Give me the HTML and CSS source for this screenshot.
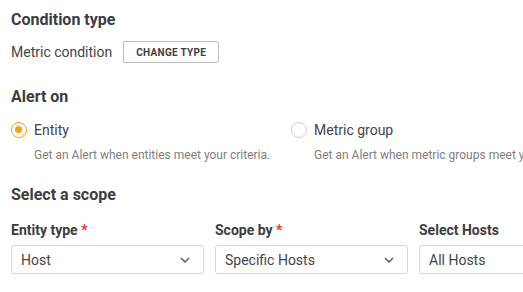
FILE: index.html
```html
<!DOCTYPE html>
<html lang="en">
<head>
  <meta charset="UTF-8" />
  <title>Alert condition</title>
  <link rel="stylesheet" href="styles.css">
</head>
<body>
<div class="form">
  <h2 class="section-title">Condition type</h2>
  <div class="type-row">
    <span class="type-name">Metric condition</span>
    <button class="btn-outline">Change type</button>
  </div>

  <h2 class="section-title spaced">Alert on</h2>
  <div class="radio-group">
    <label class="radio-option">
      <span class="radio-line">
        <span class="radio checked"></span>
        <span class="radio-label">Entity</span>
      </span>
      <span class="radio-hint">Get an Alert when entities meet your criteria.</span>
    </label>
    <label class="radio-option">
      <span class="radio-line">
        <span class="radio"></span>
        <span class="radio-label">Metric group</span>
      </span>
      <span class="radio-hint">Get an Alert when metric groups meet your criteria.</span>
    </label>
  </div>

  <h2 class="section-title scope">Select a scope</h2>
  <div class="field-grid">
    <div class="field">
      <label class="field-label">Entity type <span class="req">*</span></label>
      <div class="select">
        <span>Host</span>
        <svg class="chev" width="10" height="6" viewBox="0 0 10 6"><path d="M1 1l4 4 4-4" fill="none" stroke="#555" stroke-width="1.4"/></svg>
      </div>
    </div>
    <div class="field">
      <label class="field-label">Scope by <span class="req">*</span></label>
      <div class="select">
        <span>Specific Hosts</span>
        <svg class="chev" width="10" height="6" viewBox="0 0 10 6"><path d="M1 1l4 4 4-4" fill="none" stroke="#555" stroke-width="1.4"/></svg>
      </div>
    </div>
    <div class="field">
      <label class="field-label">Select Hosts</label>
      <div class="select">
        <span>All Hosts</span>
      </div>
    </div>
  </div>
</div>
</body>
</html>
```

FILE: styles.css
```css
body {
  margin: 0;
  font-family: Roboto, "Liberation Sans", sans-serif;
  color: #444;
  background: #fff;
  overflow: hidden;
}

.form {
  padding: 10px 0 0 11px;
}

/* Заглавија */
.section-title {
  margin: 0;
  font-size: 16px;
  line-height: 20px;
  font-weight: 700;
  color: #3d3d3d;
}
.section-title.spaced { margin-top: 24px; }
.section-title.scope { margin-top: 22px; }

.type-row {
  display: flex;
  align-items: center;
  gap: 11px;
  margin-top: 11px;
}
.type-name {
  font-size: 14px;
  color: #444;
}
.btn-outline {
  height: 22px;
  padding: 0 12px;
  border: 1px solid #bdbdbd;
  border-radius: 2px;
  background: #fff;
  font-family: inherit;
  font-size: 10px;
  font-weight: 700;
  text-transform: uppercase;
  color: #3d3d3d;
  letter-spacing: 0.3px;
}

/* Радио */
.radio-group {
  display: grid;
  grid-template-columns: 280px 1fr;
  margin-top: 13px;
  white-space: nowrap;
}
.radio-option {
  display: flex;
  flex-direction: column;
  overflow: hidden;
}
.radio-line {
  display: flex;
  align-items: center;
  gap: 7px;
  height: 20px;
}
.radio {
  width: 16px;
  height: 16px;
  box-sizing: border-box;
  border: 1px solid #d0d0d0;
  border-radius: 50%;
  position: relative;
  flex: none;
}
.radio.checked {
  border: 1.5px solid #f6a01a;
}
.radio.checked::after {
  content: "";
  position: absolute;
  left: 3px;
  top: 3px;
  width: 7px;
  height: 7px;
  border-radius: 50%;
  background: #f6a01a;
}
.radio-label {
  font-size: 14px;
  color: #444;
}
.radio-hint {
  margin: 7px 0 0 23px;
  font-size: 12px;
  line-height: 16px;
  color: #808080;
}

/* Полиња */
.field-grid {
  display: grid;
  grid-template-columns: 193px 193px 193px;
  column-gap: 11px;
  margin-top: 16px;
}
.field-label {
  display: block;
  font-size: 14px;
  line-height: 18px;
  font-weight: 700;
  color: #3d3d3d;
}
.req { color: #e53935; }
.select {
  margin-top: 6px;
  height: 29px;
  box-sizing: border-box;
  border: 1px solid #d6d6d6;
  border-radius: 3px;
  display: flex;
  align-items: center;
  justify-content: space-between;
  padding: 0 13px 0 9px;
  font-size: 14px;
  color: #444;
}
.chev { flex: none; }
```
